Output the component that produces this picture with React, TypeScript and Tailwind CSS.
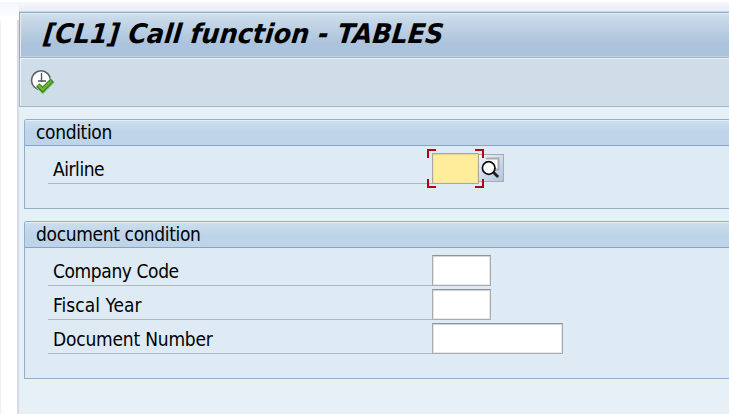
import React from "react";

const inputClass =
  "box-border h-[31px] border border-[#a9abad] border-t-[#8f9397] bg-white outline-none shadow-[inset_0_1px_1px_#d3d3da,inset_0_0_0_1px_#e8e8ec]";

function ClockCheckIcon() {
  return (
    <svg width="26" height="26" viewBox="0 0 26 26" className="block">
      <circle cx="11" cy="11.3" r="9.5" fill="#fff" stroke="#5c6064" strokeWidth="1.6" />
      <path d="M11.5 4v9M8 12h8" stroke="#505458" strokeWidth="1.3" fill="none" />
      <path d="M7.5 16l5.2 5.4L22.8 11.2" fill="none" stroke="#a5cba4" strokeWidth="6" />
      <path d="M7.9 16.2l4.8 4.8L22.3 11.4" fill="none" stroke="#35852f" strokeWidth="4.6" />
      <path d="M8.5 16.4l4.2 4.2L21.3 12" fill="none" stroke="#73b927" strokeWidth="2.2" />
    </svg>
  );
}

function SearchHelpIcon() {
  return (
    <svg width="20" height="22" viewBox="0 0 20 22" className="block">
      <path d="M5 1.5h12.5v11H9" fill="#fff" stroke="#a6aab2" strokeWidth="2" />
      <path d="M11.5 14.5l5.7 5.5" stroke="#222" strokeWidth="3" />
      <circle cx="7.7" cy="11" r="6.3" fill="#fff" stroke="#111" strokeWidth="1.7" />
    </svg>
  );
}

function Group({ title, className, children }: { title: string; className: string; children: React.ReactNode }) {
  return (
    <section className={`rounded-tl-[3px] border border-r-0 border-[#8fb0cd] bg-[#deeaf4] ${className}`}>
      <h2 className="h-[26px] rounded-tl-[2px] border-b border-[#87a3c6] bg-gradient-to-b from-[#cddfee] to-[#bed4e9] to-50% pl-[11px] text-[19px] leading-[25px] font-normal tracking-[-0.34px] shadow-[inset_0_1px_0_#e4eef6]">
        {title}
      </h2>
      {children}
    </section>
  );
}

function Row({ label, spacing, children }: { label: string; spacing: string; children: React.ReactNode }) {
  return (
    <div className="flex h-[34px] items-start pl-[23px]">
      <label className="h-[31px] w-[384px] border-b border-[#b3b8bc] pl-[5px] text-[19px] leading-[32px]">
        <span className={spacing}>{label}</span>
      </label>
      {children}
    </div>
  );
}

export default function App() {
  return (
    <div className="flex h-[414px] w-[729px] overflow-hidden bg-white font-['DejaVu_Sans_Condensed','DejaVu_Sans',sans-serif] text-black [font-stretch:condensed]">
      <aside className="flex w-[19px] shrink-0 flex-col pt-[2px]">
        <div className="h-[18px] bg-gradient-to-b from-[#f3f6fb] to-white" />
        <div className="flex-1 border-r-2 border-l border-l-[#f1f1f3] border-r-[#d5dbe8] bg-white" />
      </aside>
      <main className="flex min-w-0 flex-1 flex-col bg-[#e8f0f7]">
        <div className="h-[12px] shrink-0 border-t-2 border-b border-t-white border-b-[#cfdae6] bg-gradient-to-b from-[#f5f8fc] to-[#e9edf5]" />
        <header className="h-[46px] shrink-0 border-t border-b border-l border-[#8faac6] border-b-[#a2b4c5] bg-gradient-to-b from-[#cfdfec] to-[#abc3dc] to-70% pl-[24px] shadow-[inset_1px_1px_0_#e3edf5,inset_0_-1px_0_#c0d0e0]">
          <h1 className="origin-left [transform:skewX(-6deg)_scaleX(1.047)] text-[27px] leading-[41px] font-bold whitespace-nowrap italic">[CL1] Call function - TABLES</h1>
        </header>
        <div className="flex h-[49px] shrink-0 border-b border-l border-[#a3b5c5] bg-[#cfdde8] pt-[11px] pl-[10px] shadow-[inset_1px_1px_0_#edf3f8]">
          <ClockCheckIcon />
        </div>
        <div className="pt-[12px] pl-[5px]">
          <Group title="condition" className="h-[90px]">
            <div className="pt-[7px]">
              <Row label="Airline" spacing="tracking-[-0.45px]">
                <div className="relative">
                  <input aria-label="Airline" className="block h-[31px] w-[47px] border border-[#a9a9a2] bg-[#ffed9b] shadow-[inset_0_1px_1px_#e2d391,inset_0_0_0_1px_#f5e4a0] outline-none" />
                  <span className="absolute -top-1 -left-[5px] h-[9px] w-[9px] border-t-2 border-l-2 border-[#ad0714]" />
                  <span className="absolute -top-1 left-[43px] z-10 h-[9px] w-[9px] border-t-2 border-r-2 border-[#ad0714]" />
                  <span className="absolute top-[26px] -left-[5px] h-[9px] w-[9px] border-b-2 border-l-2 border-[#ad0714]" />
                  <span className="absolute top-[26px] left-[43px] z-10 h-[9px] w-[9px] border-r-2 border-b-2 border-[#ad0714]" />
                </div>
                <button aria-label="Search" className="mt-px h-[28px] w-[25px] border border-l-0 border-[#a5abb7] bg-gradient-to-br from-[#edf3fb] to-[#b4c4dc] pl-[2px]">
                  <SearchHelpIcon />
                </button>
              </Row>
            </div>
          </Group>
          <Group title="document condition" className="mt-[12px] h-[158px]">
            <div className="pt-[7px]">
              <Row label="Company Code" spacing="tracking-[-0.4px]">
                <input aria-label="Company Code" className={`${inputClass} w-[59px]`} />
              </Row>
              <Row label="Fiscal Year" spacing="tracking-[0.05px]">
                <input aria-label="Fiscal Year" className={`${inputClass} w-[59px]`} />
              </Row>
              <Row label="Document Number" spacing="tracking-[-0.2px]">
                <input aria-label="Document Number" className={`${inputClass} w-[131px]`} />
              </Row>
            </div>
          </Group>
        </div>
      </main>
    </div>
  );
}
